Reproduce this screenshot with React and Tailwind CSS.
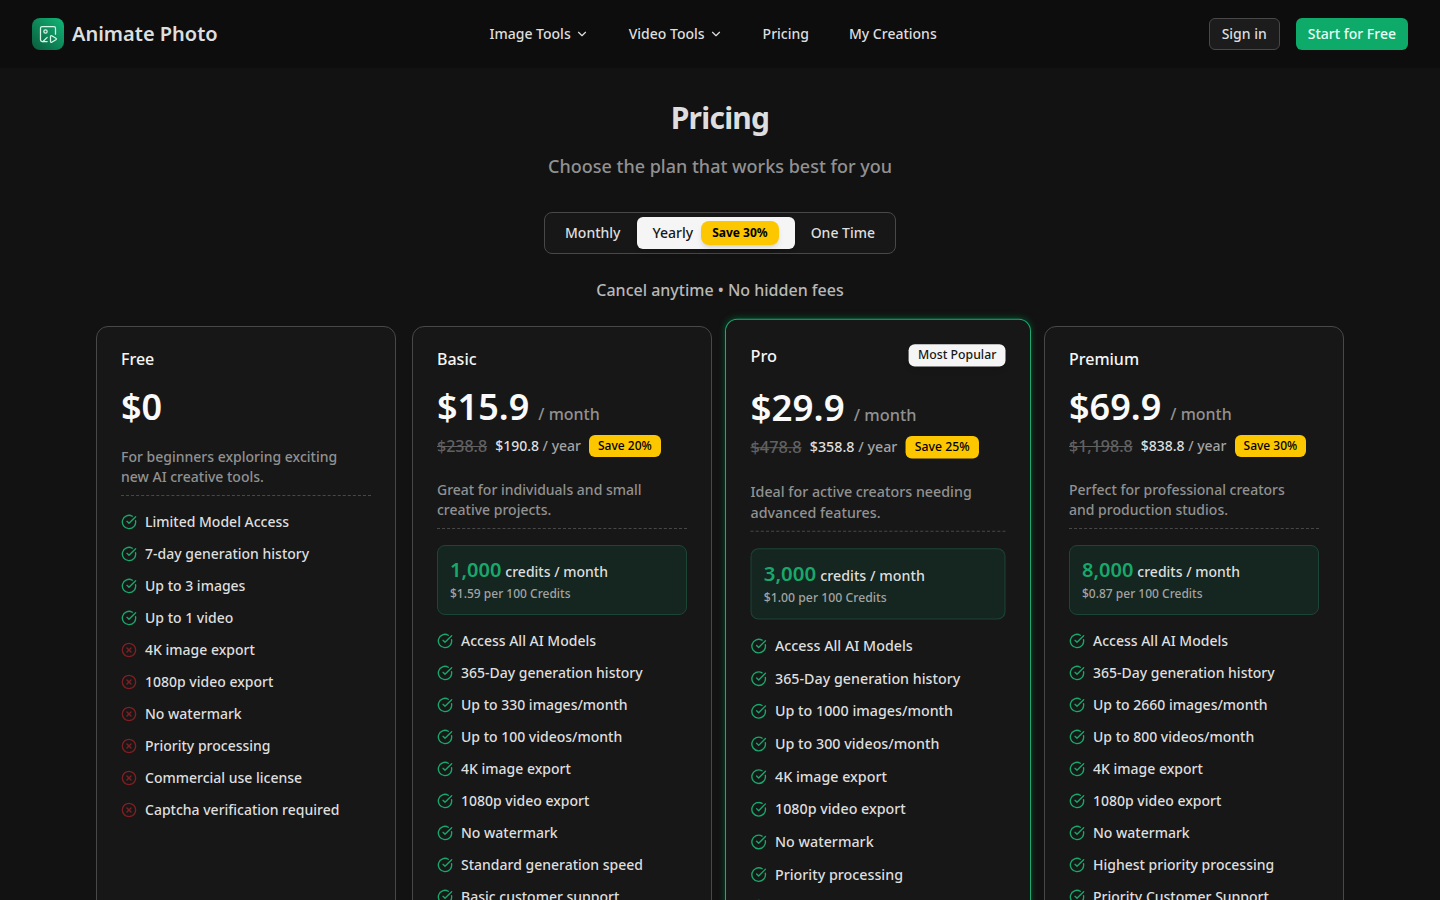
import React, { useState } from 'react';
import { ChevronDown, CircleCheckBig, CircleX, ImagePlay } from 'lucide-react';

const NAV = [
  { label: 'Image Tools', menu: true },
  { label: 'Video Tools', menu: true },
  { label: 'Pricing' },
  { label: 'My Creations' },
];

const PERIODS = [
  { id: 'monthly', label: 'Monthly' },
  { id: 'yearly', label: 'Yearly', save: 'Save 30%' },
  { id: 'once', label: 'One Time' },
];

const PLANS = [
  {
    name: 'Free',
    price: '$0',
    desc: 'For beginners exploring exciting new AI creative tools.',
    features: ['Limited Model Access', '7-day generation history', 'Up to 3 images', 'Up to 1 video'],
    missing: [
      '4K image export',
      '1080p video export',
      'No watermark',
      'Priority processing',
      'Commercial use license',
      'Captcha verification required',
    ],
  },
  {
    name: 'Basic',
    price: '$15.9',
    before: '$238.8',
    yearly: '$190.8',
    save: 'Save 20%',
    desc: 'Great for individuals and small creative projects.',
    credits: '1,000',
    rate: '$1.59 per 100 Credits',
    features: [
      'Access All AI Models',
      '365-Day generation history',
      'Up to 330 images/month',
      'Up to 100 videos/month',
      '4K image export',
      '1080p video export',
      'No watermark',
      'Standard generation speed',
      'Basic customer support',
      'Commercial use license',
    ],
  },
  {
    name: 'Pro',
    popular: true,
    price: '$29.9',
    before: '$478.8',
    yearly: '$358.8',
    save: 'Save 25%',
    desc: 'Ideal for active creators needing advanced features.',
    credits: '3,000',
    rate: '$1.00 per 100 Credits',
    features: [
      'Access All AI Models',
      '365-Day generation history',
      'Up to 1000 images/month',
      'Up to 300 videos/month',
      '4K image export',
      '1080p video export',
      'No watermark',
      'Priority processing',
      'Priority Customer Support',
      'Commercial use license',
      'No captcha verification',
    ],
  },
  {
    name: 'Premium',
    price: '$69.9',
    before: '$1,198.8',
    yearly: '$838.8',
    save: 'Save 30%',
    desc: 'Perfect for professional creators and production studios.',
    credits: '8,000',
    rate: '$0.87 per 100 Credits',
    features: [
      'Access All AI Models',
      '365-Day generation history',
      'Up to 2660 images/month',
      'Up to 800 videos/month',
      '4K image export',
      '1080p video export',
      'No watermark',
      'Highest priority processing',
      'Priority Customer Support',
      'Commercial use license',
    ],
  },
];

function Header() {
  return (
    <header className="flex h-17 items-center justify-between bg-[#0d0d0d] px-8">
      <a href="#home" className="flex items-center gap-2">
        <span className="flex size-8 items-center justify-center rounded-lg bg-linear-to-tr from-[#0a5c3d] to-[#10b878]">
          <ImagePlay className="size-5 text-[#d5f5e8]" strokeWidth={1.5} />
        </span>
        <span className="text-xl font-semibold text-[#dedede]">Animate Photo</span>
      </a>

      <nav className="flex items-center gap-10">
        {NAV.map((item) =>
          item.menu ? (
            <button key={item.label} className="flex items-center gap-1 text-sm font-medium">
              {item.label}
              <ChevronDown className="size-3.5" />
            </button>
          ) : (
            <a key={item.label} href="#page" className="text-sm font-medium">
              {item.label}
            </a>
          )
        )}
      </nav>

      <div className="flex items-center gap-4">
        <button className="h-8 rounded-md border border-[#484848] bg-[#1c1c1c] px-3 text-sm font-medium">Sign in</button>
        <button className="h-8 rounded-md bg-[#0daa69] px-3 text-sm font-medium text-[#e6fff4]">Start for Free</button>
      </div>
    </header>
  );
}

function PeriodToggle() {
  const [period, setPeriod] = useState('yearly');

  return (
    <div className="mt-8 flex rounded-lg border border-[#484848] bg-[#171717] p-1">
      {PERIODS.map((p) => (
        <button
          key={p.id}
          aria-pressed={period === p.id}
          onClick={() => setPeriod(p.id)}
          className={`flex h-8 items-center gap-2 rounded-md px-4 text-sm font-medium ${
            period === p.id ? 'bg-[#f5f5f5] text-[#171717] shadow-md' : ''
          }`}
        >
          {p.label}
          {p.save && (
            <span className="rounded-lg bg-[#fdc700] px-[11px] py-1 text-xs font-bold text-black shadow-md">{p.save}</span>
          )}
        </button>
      ))}
    </div>
  );
}

function Feature({ label, included }) {
  return (
    <li className="flex items-center gap-2 text-sm font-medium">
      {included ? (
        <CircleCheckBig className="size-4 shrink-0 text-[#18a86c]" />
      ) : (
        <CircleX className="size-4 shrink-0 text-[#7f1f22]" />
      )}
      {label}
    </li>
  );
}

function PlanCard({ plan }) {
  return (
    <section
      className={`flex flex-col rounded-xl border bg-[#171717] p-6 ${
        plan.popular ? 'scale-102 border-[#1fa971] shadow-[0_0_6px_#00522f]' : 'border-[#484848]'
      }`}
    >
      <div className="flex items-center justify-between">
        <h2 className="text-base leading-none font-medium text-[#f5f5f5]">{plan.name}</h2>
        {plan.popular && (
          <span className="rounded-md bg-[#f5f5f5] px-[9px] py-[3px] text-xs font-medium text-[#171717] shadow-md">
            Most Popular
          </span>
        )}
      </div>

      <div className="mt-5 flex items-baseline gap-[9px]">
        <span className="text-4xl font-semibold text-[#fafafa]">{plan.price}</span>
        {plan.yearly && <span className="text-base font-medium text-[#919191]">/ month</span>}
      </div>

      {plan.yearly && (
        <div className="mt-2 flex h-[25px] items-start gap-2 font-medium">
          <s className="text-base leading-[22px] text-[#616161]">{plan.before}</s>
          <span className="text-sm leading-[22px] text-[#a3a3a3]">
            <span className="text-[#dedede]">{plan.yearly}</span> / year
          </span>
          <span className="rounded-md bg-[#fdc700] px-[9px] py-[3px] text-xs text-black">{plan.save}</span>
        </div>
      )}

      <p className="mt-5 border-b border-dashed border-[#484848] pr-4 pb-2 text-sm font-medium text-[#919191]">
        {plan.desc}
      </p>

      {plan.credits && (
        <div className="mt-4 rounded-lg border border-[#1c4536] bg-[#15251f] p-3">
          <p className="flex items-baseline gap-1 text-sm font-medium">
            <span className="text-xl leading-6 font-semibold text-[#18a86c]">{plan.credits}</span>
            credits / month
          </p>
          <p className="mt-1 text-xs font-medium text-[#a3a3a3]">{plan.rate}</p>
        </div>
      )}

      <ul className="mt-4 flex flex-col gap-3">
        {plan.features.map((f) => (
          <Feature key={f} label={f} included />
        ))}
        {plan.missing?.map((f) => (
          <Feature key={f} label={f} />
        ))}
      </ul>

      <div className="mt-auto pt-4">
        <button className="h-10 w-full rounded-md bg-[#0daa69] text-sm font-medium text-[#e6fff4]">Get Started</button>
      </div>
    </section>
  );
}

export default function App() {
  return (
    <div className="min-h-screen bg-[#121212] font-['Noto_Sans',sans-serif] text-[#dedede]">
      <Header />
      <main className="mx-auto flex max-w-7xl flex-col items-center px-4 py-8">
        <h1 className="text-3xl font-bold tracking-tight">Pricing</h1>
        <p className="mt-4 text-lg font-medium text-[#919191]">Choose the plan that works best for you</p>
        <PeriodToggle />
        <p className="mt-6 text-base font-medium text-[#b8b8b8]">Cancel anytime • No hidden fees</p>
        <div className="mt-6 grid w-full grid-cols-4 gap-4">
          {PLANS.map((plan) => (
            <PlanCard key={plan.name} plan={plan} />
          ))}
        </div>
      </main>
    </div>
  );
}
